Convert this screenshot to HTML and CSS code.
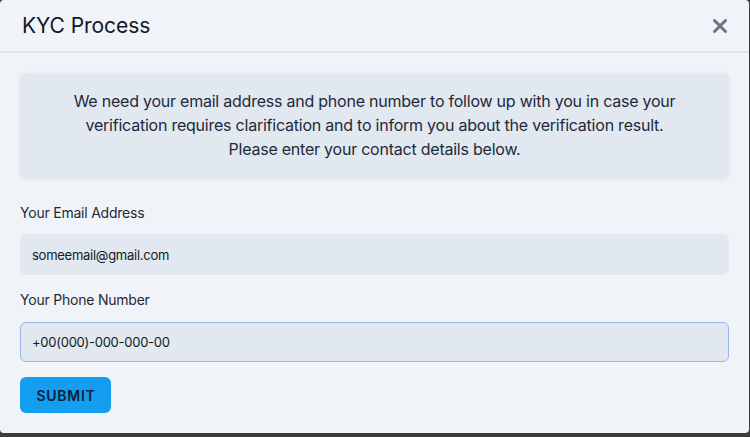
FILE: index.html
```html
<!DOCTYPE html>
<html>
<head>
<meta charset="utf-8">
<link rel="stylesheet" href="styles.css">
</head>
<body>
<div class="modal">
  <div class="modal-header">
    <h1 class="modal-title">KYC Process</h1>
    <button class="close-btn" aria-label="Close">
      <svg width="16" height="16" viewBox="0 0 16 16"><path d="M2.5 2.5 L13.5 13.5 M13.5 2.5 L2.5 13.5" stroke="#6b7280" stroke-width="3" stroke-linecap="round"/></svg>
    </button>
  </div>
  <div class="modal-body">
    <div class="info-box">
      We need your email address and phone number to follow up with you in case your verification requires clarification and to inform you about the verification result.<br>Please enter your contact details below.
    </div>
    <form class="form">
      <label class="field-label field-label-first">Your Email Address</label>
      <input class="field-input" type="text" value="someemail@gmail.com">
      <label class="field-label">Your Phone Number</label>
      <input class="field-input field-focused" type="text" value="+00(000)-000-000-00">
      <button type="button" class="submit-btn">SUBMIT</button>
    </form>
  </div>
</div>
</body>
</html>
```
FILE: styles.css
```css
html, body {
  margin: 0;
  padding: 0;
}
body {
  background: #3d3d3d;
  width: 750px;
  height: 437px;
  overflow: hidden;
  font-family: "Inter", "Liberation Sans", sans-serif;
  color: #111827;
}
.modal {
  width: 749px;
  height: 433px;
  background: #f0f4f9;
  border-radius: 4px;
  box-sizing: border-box;
  overflow: hidden;
}
.modal-header {
  height: 53px;
  box-sizing: border-box;
  border-bottom: 2px solid #dde4ee;
  display: flex;
  align-items: center;
  justify-content: space-between;
  padding: 0 20px 0 22px;
}
.modal-title {
  margin: 0;
  font-size: 21px;
  font-weight: 400;
  color: #111827;
  letter-spacing: -0.05px;
}
.close-btn {
  border: 0;
  background: transparent;
  padding: 0;
  width: 16px;
  height: 16px;
  display: flex;
  align-items: center;
  justify-content: center;
  margin-top: 1px;
  margin-right: 1px;
}
.modal-body {
  padding: 20px 20px 0 20px;
}
.info-box {
  background: #e2e8f0;
  border-radius: 6px;
  box-shadow: 0 1px 4px rgba(15, 23, 42, 0.08);
  padding: 16px 20px 17px;
  text-align: center;
  font-size: 16px;
  line-height: 24px;
  letter-spacing: -0.23px;
  color: #1e293b;
}
.form {
  display: flex;
  flex-direction: column;
}
.field-label {
  font-size: 14px;
  line-height: 20px;
  letter-spacing: -0.22px;
  color: #1f2937;
  margin-top: 15px;
  margin-bottom: 12px;
}
.field-label-first {
  margin-top: 25px;
  margin-bottom: 11px;
}
.field-input {
  height: 41px;
  box-sizing: border-box;
  background: #e2e8f0;
  border: 1px solid #e2e8f0;
  border-radius: 6px;
  padding: 0 11px;
  font-family: "Inter", "Liberation Sans", sans-serif;
  font-size: 13px;
  letter-spacing: -0.26px;
  color: #111827;
  outline: none;
}
.field-focused {
  height: 40px;
  border-color: #9ab6e6;
}
.submit-btn {
  margin-top: 15px;
  align-self: flex-start;
  width: 91px;
  height: 36px;
  background: #149ef0;
  border: 0;
  border-radius: 6px;
  font-family: "Inter", "Liberation Sans", sans-serif;
  font-size: 14px;
  font-weight: 600;
  letter-spacing: 0.7px;
  color: #0f1d36;
  padding: 0 0 0 1px;
}
```
